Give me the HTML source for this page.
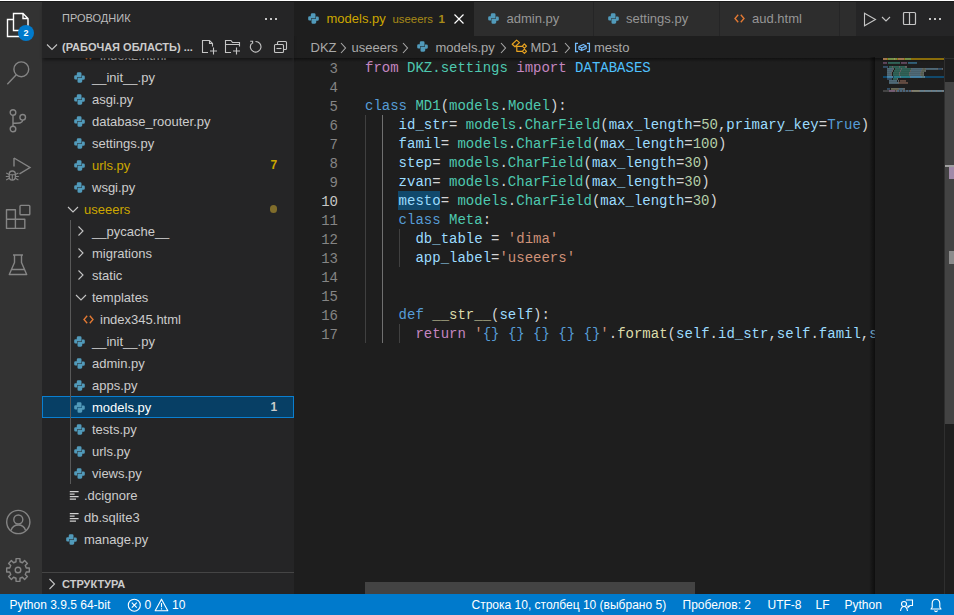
<!DOCTYPE html>
<html><head><meta charset="utf-8">
<style>
*{margin:0;padding:0;box-sizing:border-box}
html,body{width:954px;height:615px;overflow:hidden;background:#1e1e1e}
body{position:relative;font-family:"Liberation Sans",sans-serif;color:#cccccc}
.abs{position:absolute}
.tx{white-space:nowrap}
.mono{font-family:"Liberation Mono",monospace;white-space:pre}
.k{color:#c586c0}.b{color:#569cd6}.c{color:#4ec9b0}.v{color:#9cdcfe}.s{color:#ce9178}.n{color:#b5cea8}.f{color:#dcdcaa}.w{color:#d4d4d4}.cn{color:#4fc1ff}
</style></head><body>
<svg width="0" height="0" style="position:absolute">
 <defs>
  <symbol id="py" viewBox="0 0 12 12">
   <path fill="#519aba" d="M4.6 0.2H6.8Q8.2 0.2 8.2 1.6V5.6H3.3V8.2H1.6Q0.2 8.2 0.2 6.8V5Q0.2 3.6 1.6 3.6H3V1.8Q3 0.2 4.6 0.2Z"/>
   <path fill="#519aba" d="M7.4 11.8H5.2Q3.8 11.8 3.8 10.4V6.4H8.7V3.8H10.4Q11.8 3.8 11.8 5.2V7Q11.8 8.4 10.4 8.4H9V10.2Q9 11.8 7.4 11.8Z"/>
  </symbol>
  <symbol id="html" viewBox="0 0 11 9">
   <path fill="none" stroke="#e37933" stroke-width="1.35" d="M4.2 0.8L1 4.5L4.2 8.2M6.8 0.8L10 4.5L6.8 8.2"/>
  </symbol>
  <symbol id="lines" viewBox="0 0 10 9">
   <path fill="none" stroke="#d0d0d0" stroke-width="1.05" d="M0.8 0.6H9.6M0.8 3.1H5.6M0.8 5.6H9.6M0.8 8.1H7"/>
  </symbol>
 </defs>
</svg>
<div class="abs" style="left:0px;top:0px;width:954px;height:1px;background:#ffffff;"></div>
<div class="abs" style="left:0px;top:1px;width:954px;height:1px;background:#1a1a1a;"></div>
<div class="abs" style="left:0px;top:2px;width:42px;height:592px;background:#333333;"></div>
<div class="abs" style="left:42px;top:2px;width:252px;height:592px;background:#252526;"></div>
<div class="abs" style="left:294px;top:2px;width:660px;height:592px;background:#1e1e1e;"></div>
<svg class="abs" style="left:83px;top:51px;" width="11" height="9"><use href="#html"/></svg>
<div class="abs tx" style="left:100px;top:47.00px;font-size:13px;line-height:17px;color:#cccccc;">index2.html</div>
<svg class="abs" style="left:74px;top:72px;" width="11" height="11"><use href="#py"/></svg>
<div class="abs tx" style="left:92px;top:69.00px;font-size:13px;line-height:17px;color:#cccccc;">__init__.py</div>
<svg class="abs" style="left:74px;top:94px;" width="11" height="11"><use href="#py"/></svg>
<div class="abs tx" style="left:92px;top:91.00px;font-size:13px;line-height:17px;color:#cccccc;">asgi.py</div>
<svg class="abs" style="left:74px;top:116px;" width="11" height="11"><use href="#py"/></svg>
<div class="abs tx" style="left:92px;top:113.00px;font-size:13px;line-height:17px;color:#cccccc;">database_roouter.py</div>
<svg class="abs" style="left:74px;top:138px;" width="11" height="11"><use href="#py"/></svg>
<div class="abs tx" style="left:92px;top:135.00px;font-size:13px;line-height:17px;color:#cccccc;">settings.py</div>
<svg class="abs" style="left:74px;top:160px;" width="11" height="11"><use href="#py"/></svg>
<div class="abs tx" style="left:92px;top:157.00px;font-size:13px;line-height:17px;color:#cca700;">urls.py</div>
<div class="abs tx" style="left:270.5px;top:157.04px;font-size:12px;line-height:16px;color:#cca700;font-weight:bold;">7</div>
<svg class="abs" style="left:74px;top:182px;" width="11" height="11"><use href="#py"/></svg>
<div class="abs tx" style="left:92px;top:179.00px;font-size:13px;line-height:17px;color:#cccccc;">wsgi.py</div>
<svg class="abs" style="left:67px;top:201px;" width="12" height="16" viewBox="0 0 12 16"><path d="M1 6L6 11L11 6" fill="none" stroke="#c5c5c5" stroke-width="1.1"/></svg>
<div class="abs tx" style="left:84px;top:201.00px;font-size:13px;line-height:17px;color:#cca700;">useeers</div>
<div class="abs" style="left:269.5px;top:205.2px;width:7.6px;height:7.6px;background:#806d2b;border-radius:50%"></div>
<svg class="abs" style="left:77px;top:223px;" width="10" height="16" viewBox="0 0 10 16"><path d="M1.5 3.5L6 8L1.5 12.5" fill="none" stroke="#c5c5c5" stroke-width="1.1"/></svg>
<div class="abs tx" style="left:92px;top:223.00px;font-size:13px;line-height:17px;color:#cccccc;">__pycache__</div>
<svg class="abs" style="left:77px;top:245px;" width="10" height="16" viewBox="0 0 10 16"><path d="M1.5 3.5L6 8L1.5 12.5" fill="none" stroke="#c5c5c5" stroke-width="1.1"/></svg>
<div class="abs tx" style="left:92px;top:245.00px;font-size:13px;line-height:17px;color:#cccccc;">migrations</div>
<svg class="abs" style="left:77px;top:267px;" width="10" height="16" viewBox="0 0 10 16"><path d="M1.5 3.5L6 8L1.5 12.5" fill="none" stroke="#c5c5c5" stroke-width="1.1"/></svg>
<div class="abs tx" style="left:92px;top:267.00px;font-size:13px;line-height:17px;color:#cccccc;">static</div>
<svg class="abs" style="left:75px;top:289px;" width="12" height="16" viewBox="0 0 12 16"><path d="M1 6L6 11L11 6" fill="none" stroke="#c5c5c5" stroke-width="1.1"/></svg>
<div class="abs tx" style="left:92px;top:289.00px;font-size:13px;line-height:17px;color:#cccccc;">templates</div>
<svg class="abs" style="left:83px;top:315px;" width="11" height="9"><use href="#html"/></svg>
<div class="abs tx" style="left:100px;top:311.00px;font-size:13px;line-height:17px;color:#cccccc;">index345.html</div>
<svg class="abs" style="left:74px;top:336px;" width="11" height="11"><use href="#py"/></svg>
<div class="abs tx" style="left:92px;top:333.00px;font-size:13px;line-height:17px;color:#cccccc;">__init__.py</div>
<svg class="abs" style="left:74px;top:358px;" width="11" height="11"><use href="#py"/></svg>
<div class="abs tx" style="left:92px;top:355.00px;font-size:13px;line-height:17px;color:#cccccc;">admin.py</div>
<svg class="abs" style="left:74px;top:380px;" width="11" height="11"><use href="#py"/></svg>
<div class="abs tx" style="left:92px;top:377.00px;font-size:13px;line-height:17px;color:#cccccc;">apps.py</div>
<div class="abs" style="left:42px;top:396px;width:252px;height:22px;background:#073f65;border:1px solid #0a7fd0"></div>
<svg class="abs" style="left:74px;top:402px;" width="11" height="11"><use href="#py"/></svg>
<div class="abs tx" style="left:92px;top:399.00px;font-size:13px;line-height:17px;color:#ffffff;">models.py</div>
<div class="abs tx" style="left:270.5px;top:399.04px;font-size:12px;line-height:16px;color:#cccccc;font-weight:bold;">1</div>
<svg class="abs" style="left:74px;top:424px;" width="11" height="11"><use href="#py"/></svg>
<div class="abs tx" style="left:92px;top:421.00px;font-size:13px;line-height:17px;color:#cccccc;">tests.py</div>
<svg class="abs" style="left:74px;top:446px;" width="11" height="11"><use href="#py"/></svg>
<div class="abs tx" style="left:92px;top:443.00px;font-size:13px;line-height:17px;color:#cccccc;">urls.py</div>
<svg class="abs" style="left:74px;top:468px;" width="11" height="11"><use href="#py"/></svg>
<div class="abs tx" style="left:92px;top:465.00px;font-size:13px;line-height:17px;color:#cccccc;">views.py</div>
<svg class="abs" style="left:69px;top:491px;" width="10" height="9"><use href="#lines"/></svg>
<div class="abs tx" style="left:84px;top:487.00px;font-size:13px;line-height:17px;color:#cccccc;">.dcignore</div>
<svg class="abs" style="left:69px;top:513px;" width="10" height="9"><use href="#lines"/></svg>
<div class="abs tx" style="left:84px;top:509.00px;font-size:13px;line-height:17px;color:#cccccc;">db.sqlite3</div>
<svg class="abs" style="left:66px;top:534px;" width="11" height="11"><use href="#py"/></svg>
<div class="abs tx" style="left:84px;top:531.00px;font-size:13px;line-height:17px;color:#cccccc;">manage.py</div>
<div class="abs" style="left:70px;top:220px;width:1px;height:264px;background:#585858;"></div>
<div class="abs" style="left:42px;top:2px;width:252px;height:56px;background:#252526;box-shadow:0 3px 3px -1px rgba(0,0,0,0.45)"></div>
<div class="abs tx" style="left:62px;top:11.19px;font-size:11px;line-height:14px;color:#bbbbbb;">ПРОВОДНИК</div>
<svg class="abs" style="left:264px;top:17px;" width="14" height="4" viewBox="0 0 14 4"><rect x="1" y="1" width="2" height="2" fill="#c5c5c5"/><rect x="6" y="1" width="2" height="2" fill="#c5c5c5"/><rect x="11" y="1" width="2" height="2" fill="#c5c5c5"/></svg>
<svg class="abs" style="left:46px;top:42px;" width="12" height="10" viewBox="0 0 12 10"><path d="M1 2.5L6 7.5L11 2.5" fill="none" stroke="#c5c5c5" stroke-width="1.1"/></svg>
<div class="abs tx" style="left:62px;top:39.69px;font-size:11px;line-height:14px;color:#cccccc;font-weight:bold;">(РАБОЧАЯ ОБЛАСТЬ) ...</div>
<div class="abs" style="left:42px;top:572px;width:252px;height:1px;background:#454545;"></div>
<svg class="abs" style="left:47px;top:577px;" width="10" height="14" viewBox="0 0 10 14"><path d="M2.5 2L7.5 7L2.5 12" fill="none" stroke="#c5c5c5" stroke-width="1.1"/></svg>
<div class="abs tx" style="left:62px;top:577.19px;font-size:11px;line-height:14px;color:#cccccc;font-weight:bold;">СТРУКТУРА</div>
<svg class="abs" style="left:5px;top:11px;" width="26" height="28" viewBox="0 0 26 28"><path d="M8.5 2.5H18L23 7.5V19.5H8.5Z M18 2.5V7.5H23" fill="none" stroke="#ffffff" stroke-width="1.4" stroke-linejoin="miter"/><path d="M8.5 8.5H2.5V25.5H17V19.5" fill="none" stroke="#ffffff" stroke-width="1.4"/></svg>
<div class="abs" style="left:18px;top:25px;width:16px;height:16px;border-radius:50%;background:#007acc;color:#fff;font-size:9px;font-weight:bold;line-height:16px;text-align:center">2</div>
<svg class="abs" style="left:5px;top:59px;" width="28" height="28" viewBox="0 0 28 28"><circle cx="16.3" cy="10.3" r="7.4" fill="none" stroke="#858585" stroke-width="1.4"/><path d="M11.3 15.7L2.3 25.2" stroke="#858585" stroke-width="1.4"/></svg>
<svg class="abs" style="left:7px;top:107px;" width="24" height="26" viewBox="0 0 24 26"><circle cx="6" cy="5.5" r="2.8" fill="none" stroke="#858585" stroke-width="1.4"/><circle cx="6" cy="22" r="2.8" fill="none" stroke="#858585" stroke-width="1.4"/><circle cx="15.7" cy="10.3" r="2.8" fill="none" stroke="#858585" stroke-width="1.4"/><path d="M6 8.3V19.2M15.7 13.1C15.7 16 13 16.2 6 16.2" fill="none" stroke="#858585" stroke-width="1.4"/></svg>
<svg class="abs" style="left:4px;top:155px;" width="28" height="28" viewBox="0 0 28 28"><path d="M10 3V11.5M10 3L26 12.5L15.5 18.8" fill="none" stroke="#858585" stroke-width="1.4" stroke-linejoin="miter"/><path d="M5.2 19.5C5.2 17.3 6.6 16 8.3 16C10 16 11.4 17.3 11.4 19.5V21.5C11.4 23.8 10 25.2 8.3 25.2C6.6 25.2 5.2 23.8 5.2 21.5Z" fill="none" stroke="#858585" stroke-width="1.3"/><path d="M5.2 19.8H11.4M8.3 19.8V25M2.2 18L5.2 19.5M2.2 25L5.2 23.2M14.4 18L11.4 19.5M14.4 25L11.4 23.2M1.8 21.5H5.2M11.4 21.5H14.8" fill="none" stroke="#858585" stroke-width="1.1"/></svg>
<svg class="abs" style="left:4px;top:203px;" width="28" height="28" viewBox="0 0 28 28"><path d="M2.5 6.8H11.4V16.2H20.8V25.4H2.5ZM2.5 16.2H11.4V25.4" fill="none" stroke="#858585" stroke-width="1.4" stroke-linejoin="round"/><rect x="16" y="2.4" width="9.8" height="9.4" rx="0.8" fill="none" stroke="#858585" stroke-width="1.4"/></svg>
<svg class="abs" style="left:6px;top:252px;" width="26" height="28" viewBox="0 0 26 28"><path d="M7 3H17M8.5 3V10.5L3.3 22.5H20.7L15.5 10.5V3M5 17.5H19" fill="none" stroke="#858585" stroke-width="1.4" stroke-linejoin="round"/></svg>
<svg class="abs" style="left:5px;top:508px;" width="28" height="28" viewBox="0 0 28 28"><circle cx="13.3" cy="14" r="11.6" fill="none" stroke="#858585" stroke-width="1.4"/><circle cx="13.3" cy="11.5" r="4.5" fill="none" stroke="#858585" stroke-width="1.4"/><path d="M6 22.5C7.3 18.5 10 17 13.3 17C16.6 17 19.3 18.5 20.6 22.5" fill="none" stroke="#858585" stroke-width="1.4"/></svg>
<svg class="abs" style="left:4px;top:556px;" width="28" height="28" viewBox="0 0 28 28"><path d="M25.33 12.02L25.33 15.98L22.27 15.98L21.25 18.44L23.41 20.61L20.61 23.41L18.44 21.25L15.98 22.27L15.98 25.33L12.02 25.33L12.02 22.27L9.56 21.25L7.39 23.41L4.59 20.61L6.75 18.44L5.73 15.98L2.67 15.98L2.67 12.02L5.73 12.02L6.75 9.56L4.59 7.39L7.39 4.59L9.56 6.75L12.02 5.73L12.02 2.67L15.98 2.67L15.98 5.73L18.44 6.75L20.61 4.59L23.41 7.39L21.25 9.56L22.27 12.02Z" fill="none" stroke="#858585" stroke-width="1.4" stroke-linejoin="round"/><circle cx="14" cy="14" r="2.8" fill="none" stroke="#858585" stroke-width="1.4"/></svg>
<svg class="abs" style="left:201px;top:39px;" width="17" height="17" viewBox="0 0 17 17"><path d="M7 13.5H1.5V1.5H8.5L11.5 4.5V7.5M8.5 1.5V4.5H11.5M12.5 8.5V15.5M9 12H16" fill="none" stroke="#c5c5c5" stroke-width="1.1"/></svg>
<svg class="abs" style="left:224px;top:39px;" width="17" height="17" viewBox="0 0 17 17"><path d="M7 13.5H1.5V1.5H7L8.5 3.5H15.5V7.5M1.5 5.5H15.5M12.5 8.5V15.5M9 12H16" fill="none" stroke="#c5c5c5" stroke-width="1.1"/></svg>
<svg class="abs" style="left:248px;top:40px;" width="15" height="14" viewBox="0 0 15 14"><path d="M3.6 3.4A5.3 5.3 0 1 0 7.5 1.5" fill="none" stroke="#c5c5c5" stroke-width="1.1"/><path d="M2.2 1.2H4.6V3.8" fill="none" stroke="#c5c5c5" stroke-width="1.1"/></svg>
<svg class="abs" style="left:273px;top:40px;" width="15" height="14" viewBox="0 0 15 14"><path d="M4.5 4.5V2.5Q4.5 1.5 5.5 1.5H12.5Q13.5 1.5 13.5 2.5V8.5Q13.5 9.5 12.5 9.5H10.5" fill="none" stroke="#c5c5c5" stroke-width="1.1"/><rect x="1.5" y="4.5" width="9" height="8" rx="1" fill="none" stroke="#c5c5c5" stroke-width="1.1"/><path d="M3.5 8.5H8.5" stroke="#c5c5c5" stroke-width="1.1"/></svg>
<div class="abs" style="left:294px;top:2px;width:660px;height:34px;background:#252526;"></div>
<div class="abs" style="left:294px;top:2px;width:180px;height:34px;background:#1e1e1e;"></div>
<div class="abs" style="left:474px;top:2px;width:120px;height:34px;background:#2d2d2d;"></div>
<div class="abs" style="left:594px;top:2px;width:126px;height:34px;background:#2d2d2d;"></div>
<div class="abs" style="left:720px;top:2px;width:120px;height:34px;background:#2d2d2d;"></div>
<div class="abs" style="left:840px;top:2px;width:16px;height:34px;background:#2d2d2d;"></div>
<div class="abs" style="left:593px;top:2px;width:1px;height:34px;background:#252526;"></div>
<div class="abs" style="left:719px;top:2px;width:1px;height:34px;background:#252526;"></div>
<div class="abs" style="left:839px;top:2px;width:1px;height:34px;background:#252526;"></div>
<svg class="abs" style="left:308px;top:13px;" width="11" height="11"><use href="#py"/></svg>
<div class="abs tx" style="left:326.5px;top:10.00px;font-size:13px;line-height:17px;color:#cca700;">models.py</div>
<div class="abs tx" style="left:392.5px;top:11.55px;font-size:11.4px;line-height:15px;color:#a88b18;">useeers</div>
<div class="abs tx" style="left:438.5px;top:11.52px;font-size:11.5px;line-height:15px;color:#a88b18;font-weight:bold;">1</div>
<svg class="abs" style="left:453px;top:13px;" width="12" height="12" viewBox="0 0 12 12"><path d="M1.5 1.5L10.5 10.5M10.5 1.5L1.5 10.5" stroke="#ffffff" stroke-width="1.2"/></svg>
<svg class="abs" style="left:488px;top:13px;" width="11" height="11"><use href="#py"/></svg>
<div class="abs tx" style="left:506.5px;top:10.00px;font-size:13px;line-height:17px;color:#969696;">admin.py</div>
<svg class="abs" style="left:608px;top:13px;" width="11" height="11"><use href="#py"/></svg>
<div class="abs tx" style="left:626px;top:10.00px;font-size:13px;line-height:17px;color:#969696;">settings.py</div>
<svg class="abs" style="left:734px;top:14px;" width="11" height="9"><use href="#html"/></svg>
<div class="abs tx" style="left:752px;top:10.00px;font-size:13px;line-height:17px;color:#969696;">aud.html</div>
<svg class="abs" style="left:863px;top:12px;" width="14" height="15" viewBox="0 0 14 15"><path d="M1.5 1.2L12.5 7.5L1.5 13.8Z" fill="none" stroke="#c5c5c5" stroke-width="1.1"/></svg>
<svg class="abs" style="left:881px;top:16px;" width="10" height="6" viewBox="0 0 10 6"><path d="M1 1L5 5L9 1" fill="none" stroke="#c5c5c5" stroke-width="1.1"/></svg>
<svg class="abs" style="left:902px;top:11px;" width="15" height="15" viewBox="0 0 15 15"><rect x="1.5" y="1.5" width="12" height="12" rx="1" fill="none" stroke="#c5c5c5" stroke-width="1.2"/><path d="M7.5 1.5V13.5" stroke="#c5c5c5" stroke-width="1.2"/></svg>
<svg class="abs" style="left:928px;top:17px;" width="14" height="4" viewBox="0 0 14 4"><rect x="1" y="1" width="2" height="2" fill="#c5c5c5"/><rect x="6" y="1" width="2" height="2" fill="#c5c5c5"/><rect x="11" y="1" width="2" height="2" fill="#c5c5c5"/></svg>
<div class="abs tx" style="left:310.5px;top:39.00px;font-size:13px;line-height:17px;color:#a9a9a9;">DKZ</div>
<svg class="abs" style="left:339px;top:41px;" width="8" height="14" viewBox="0 0 8 14"><path d="M2 2L6.5 7L2 12" fill="none" stroke="#a9a9a9" stroke-width="1.1"/></svg>
<div class="abs tx" style="left:351.5px;top:39.00px;font-size:13px;line-height:17px;color:#a9a9a9;">useeers</div>
<svg class="abs" style="left:401px;top:41px;" width="8" height="14" viewBox="0 0 8 14"><path d="M2 2L6.5 7L2 12" fill="none" stroke="#a9a9a9" stroke-width="1.1"/></svg>
<svg class="abs" style="left:417px;top:41px;" width="11" height="11"><use href="#py"/></svg>
<div class="abs tx" style="left:435.5px;top:39.00px;font-size:13px;line-height:17px;color:#a9a9a9;">models.py</div>
<svg class="abs" style="left:499px;top:41px;" width="8" height="14" viewBox="0 0 8 14"><path d="M2 2L6.5 7L2 12" fill="none" stroke="#a9a9a9" stroke-width="1.1"/></svg>
<svg class="abs" style="left:511px;top:39px;" width="17" height="16" viewBox="0 0 17 16"><path d="M1.2 5.3L5.6 1.1L8.5 3.6L4 7.8Z M5.8 7V12.3H11.3M5.8 7.3H11.3 M13.4 5L15.5 7.1L13.4 9.2L11.3 7.1Z M13.4 10.2L15.5 12.3L13.4 14.4L11.3 12.3Z" fill="none" stroke="#e8a321" stroke-width="1.2" stroke-linejoin="round"/></svg>
<div class="abs tx" style="left:530.5px;top:39.00px;font-size:13px;line-height:17px;color:#a9a9a9;">MD1</div>
<svg class="abs" style="left:563px;top:41px;" width="8" height="14" viewBox="0 0 8 14"><path d="M2 2L6.5 7L2 12" fill="none" stroke="#a9a9a9" stroke-width="1.1"/></svg>
<svg class="abs" style="left:574px;top:40px;" width="17" height="14" viewBox="0 0 17 14"><path d="M4 3.4H1.6V11.6H4M13 3.4H15.4V11.6H13" fill="none" stroke="#75beff" stroke-width="1.3"/><path d="M4.9 6.6L9.4 4.4L12.2 5.9V8.4L7.7 10.6L4.9 9.1Z M4.9 6.6L7.7 8.1L12.2 5.9M7.7 8.1V10.6" fill="none" stroke="#75beff" stroke-width="1.1" stroke-linejoin="round"/></svg>
<div class="abs tx" style="left:594px;top:39.00px;font-size:13px;line-height:17px;color:#a9a9a9;">mesto</div>
<div class="abs" style="left:398px;top:191px;width:42px;height:19px;background:#11496c;"></div>
<div class="abs" style="left:365px;top:115px;width:1px;height:19px;background:#404040;"></div>
<div class="abs" style="left:382px;top:115px;width:1px;height:19px;background:#707070;"></div>
<div class="abs" style="left:365px;top:134px;width:1px;height:19px;background:#404040;"></div>
<div class="abs" style="left:382px;top:134px;width:1px;height:19px;background:#707070;"></div>
<div class="abs" style="left:365px;top:153px;width:1px;height:19px;background:#404040;"></div>
<div class="abs" style="left:382px;top:153px;width:1px;height:19px;background:#707070;"></div>
<div class="abs" style="left:365px;top:172px;width:1px;height:19px;background:#404040;"></div>
<div class="abs" style="left:382px;top:172px;width:1px;height:19px;background:#707070;"></div>
<div class="abs" style="left:365px;top:191px;width:1px;height:19px;background:#404040;"></div>
<div class="abs" style="left:382px;top:191px;width:1px;height:19px;background:#707070;"></div>
<div class="abs" style="left:365px;top:210px;width:1px;height:19px;background:#404040;"></div>
<div class="abs" style="left:382px;top:210px;width:1px;height:19px;background:#707070;"></div>
<div class="abs" style="left:365px;top:229px;width:1px;height:19px;background:#404040;"></div>
<div class="abs" style="left:382px;top:229px;width:1px;height:19px;background:#707070;"></div>
<div class="abs" style="left:365px;top:248px;width:1px;height:19px;background:#404040;"></div>
<div class="abs" style="left:382px;top:248px;width:1px;height:19px;background:#707070;"></div>
<div class="abs" style="left:365px;top:267px;width:1px;height:19px;background:#404040;"></div>
<div class="abs" style="left:382px;top:267px;width:1px;height:19px;background:#707070;"></div>
<div class="abs" style="left:365px;top:286px;width:1px;height:19px;background:#404040;"></div>
<div class="abs" style="left:382px;top:286px;width:1px;height:19px;background:#707070;"></div>
<div class="abs" style="left:365px;top:305px;width:1px;height:19px;background:#404040;"></div>
<div class="abs" style="left:382px;top:305px;width:1px;height:19px;background:#707070;"></div>
<div class="abs" style="left:365px;top:324px;width:1px;height:19px;background:#404040;"></div>
<div class="abs" style="left:382px;top:324px;width:1px;height:19px;background:#707070;"></div>
<div class="abs" style="left:399px;top:229px;width:1px;height:19px;background:#404040;"></div>
<div class="abs" style="left:399px;top:248px;width:1px;height:19px;background:#404040;"></div>
<div class="abs" style="left:399px;top:324px;width:1px;height:19px;background:#404040;"></div>
<div class="abs" style="left:294px;top:57px;width:581px;height:537px;overflow:hidden">
<div class="abs mono" style="left:0;top:2.5px;width:44px;text-align:right;font-size:14px;line-height:19px;color:#858585">3</div>
<div class="abs mono" style="left:71.0px;top:2px;font-size:14px;line-height:19px"><span class="k">from</span><span class="w"> </span><span class="c">DKZ</span><span class="c">.</span><span class="c">settings</span><span class="w"> </span><span class="k">import</span><span class="w"> </span><span class="cn">DATABASES</span></div>
<div class="abs mono" style="left:0;top:21.5px;width:44px;text-align:right;font-size:14px;line-height:19px;color:#858585">4</div>
<div class="abs mono" style="left:0;top:40.5px;width:44px;text-align:right;font-size:14px;line-height:19px;color:#858585">5</div>
<div class="abs mono" style="left:71.0px;top:40px;font-size:14px;line-height:19px"><span class="b">class</span><span class="w"> </span><span class="c">MD1</span><span class="w">(</span><span class="c">models</span><span class="w">.</span><span class="c">Model</span><span class="w">):</span></div>
<div class="abs mono" style="left:0;top:59.5px;width:44px;text-align:right;font-size:14px;line-height:19px;color:#858585">6</div>
<div class="abs mono" style="left:71.0px;top:59px;font-size:14px;line-height:19px"><span class="w">    </span><span class="v">id_str</span><span class="w">= </span><span class="c">models</span><span class="w">.</span><span class="c">CharField</span><span class="w">(</span><span class="v">max_length</span><span class="w">=</span><span class="n">50</span><span class="w">,</span><span class="v">primary_key</span><span class="w">=</span><span class="b">True</span><span class="w">)</span></div>
<div class="abs mono" style="left:0;top:78.5px;width:44px;text-align:right;font-size:14px;line-height:19px;color:#858585">7</div>
<div class="abs mono" style="left:71.0px;top:78px;font-size:14px;line-height:19px"><span class="w">    </span><span class="v">famil</span><span class="w">= </span><span class="c">models</span><span class="w">.</span><span class="c">CharField</span><span class="w">(</span><span class="v">max_length</span><span class="w">=</span><span class="n">100</span><span class="w">)</span></div>
<div class="abs mono" style="left:0;top:97.5px;width:44px;text-align:right;font-size:14px;line-height:19px;color:#858585">8</div>
<div class="abs mono" style="left:71.0px;top:97px;font-size:14px;line-height:19px"><span class="w">    </span><span class="v">step</span><span class="w">= </span><span class="c">models</span><span class="w">.</span><span class="c">CharField</span><span class="w">(</span><span class="v">max_length</span><span class="w">=</span><span class="n">30</span><span class="w">)</span></div>
<div class="abs mono" style="left:0;top:116.5px;width:44px;text-align:right;font-size:14px;line-height:19px;color:#858585">9</div>
<div class="abs mono" style="left:71.0px;top:116px;font-size:14px;line-height:19px"><span class="w">    </span><span class="v">zvan</span><span class="w">= </span><span class="c">models</span><span class="w">.</span><span class="c">CharField</span><span class="w">(</span><span class="v">max_length</span><span class="w">=</span><span class="n">30</span><span class="w">)</span></div>
<div class="abs mono" style="left:0;top:135.5px;width:44px;text-align:right;font-size:14px;line-height:19px;color:#c6c6c6">10</div>
<div class="abs mono" style="left:71.0px;top:135px;font-size:14px;line-height:19px"><span class="w">    </span><span class="v">mesto</span><span class="w">= </span><span class="c">models</span><span class="w">.</span><span class="c">CharField</span><span class="w">(</span><span class="v">max_length</span><span class="w">=</span><span class="n">30</span><span class="w">)</span></div>
<div class="abs mono" style="left:0;top:154.5px;width:44px;text-align:right;font-size:14px;line-height:19px;color:#858585">11</div>
<div class="abs mono" style="left:71.0px;top:154px;font-size:14px;line-height:19px"><span class="w">    </span><span class="b">class</span><span class="w"> </span><span class="c">Meta</span><span class="w">:</span></div>
<div class="abs mono" style="left:0;top:173.5px;width:44px;text-align:right;font-size:14px;line-height:19px;color:#858585">12</div>
<div class="abs mono" style="left:71.0px;top:173px;font-size:14px;line-height:19px"><span class="w">      </span><span class="v">db_table</span><span class="w"> = </span><span class="s">'dima'</span></div>
<div class="abs mono" style="left:0;top:192.5px;width:44px;text-align:right;font-size:14px;line-height:19px;color:#858585">13</div>
<div class="abs mono" style="left:71.0px;top:192px;font-size:14px;line-height:19px"><span class="w">      </span><span class="v">app_label</span><span class="w">=</span><span class="s">'useeers'</span></div>
<div class="abs mono" style="left:0;top:211.5px;width:44px;text-align:right;font-size:14px;line-height:19px;color:#858585">14</div>
<div class="abs mono" style="left:0;top:230.5px;width:44px;text-align:right;font-size:14px;line-height:19px;color:#858585">15</div>
<div class="abs mono" style="left:0;top:249.5px;width:44px;text-align:right;font-size:14px;line-height:19px;color:#858585">16</div>
<div class="abs mono" style="left:71.0px;top:249px;font-size:14px;line-height:19px"><span class="w">    </span><span class="b">def</span><span class="w"> </span><span class="f">__str__</span><span class="w">(</span><span class="v">self</span><span class="w">):</span></div>
<div class="abs mono" style="left:0;top:268.5px;width:44px;text-align:right;font-size:14px;line-height:19px;color:#858585">17</div>
<div class="abs mono" style="left:71.0px;top:268px;font-size:14px;line-height:19px"><span class="w">      </span><span class="k">return</span><span class="w"> </span><span class="s">'</span><span class="b">{}</span><span class="s"> </span><span class="b">{}</span><span class="s"> </span><span class="b">{}</span><span class="s"> </span><span class="b">{}</span><span class="s"> </span><span class="b">{}</span><span class="s">'</span><span class="w">.</span><span class="f">format</span><span class="w">(</span><span class="v">self</span><span class="w">.</span><span class="v">id_str</span><span class="w">,</span><span class="v">self</span><span class="w">.</span><span class="v">famil</span><span class="w">,</span><span class="v">self</span><span class="w">.</span><span class="v">step</span><span class="w">,</span><span class="v">self</span><span class="w">.</span><span class="v">zvan</span><span class="w">)</span></div>
</div>
<div class="abs" style="left:869px;top:57px;width:6px;height:537px;background:linear-gradient(to right,rgba(0,0,0,0),rgba(0,0,0,0.55))"></div>
<div class="abs" style="left:294px;top:58px;width:660px;height:4px;background:linear-gradient(to bottom,rgba(0,0,0,0.45),rgba(0,0,0,0))"></div>
<div class="abs" style="left:883px;top:58px;width:61px;height:2px;background:#8a6d0a;"></div>
<div class="abs" style="left:883px;top:76px;width:61px;height:2px;background:#11496c;"></div>
<div class="abs" style="left:883px;top:90px;width:61px;height:2px;background:#444444;"></div>
<svg class="abs" style="left:883px;top:58px;" width="61" height="40" viewBox="0 0 61 40"><rect x="0" y="0.2" width="4" height="1.5" fill="#c586c0" opacity="0.5"/><rect x="5" y="0.2" width="6" height="1.5" fill="#4ec9b0" opacity="0.5"/><rect x="11" y="0.2" width="1" height="1.5" fill="#d4d4d4" opacity="0.5"/><rect x="12" y="0.2" width="2" height="1.5" fill="#4ec9b0" opacity="0.5"/><rect x="15" y="0.2" width="6" height="1.5" fill="#c586c0" opacity="0.5"/><rect x="22" y="0.2" width="6" height="1.5" fill="#4ec9b0" opacity="0.5"/><rect x="0" y="4.2" width="4" height="1.5" fill="#c586c0" opacity="0.5"/><rect x="5" y="4.2" width="3" height="1.5" fill="#4ec9b0" opacity="0.5"/><rect x="8" y="4.2" width="1" height="1.5" fill="#4ec9b0" opacity="0.5"/><rect x="9" y="4.2" width="8" height="1.5" fill="#4ec9b0" opacity="0.5"/><rect x="18" y="4.2" width="6" height="1.5" fill="#c586c0" opacity="0.5"/><rect x="25" y="4.2" width="9" height="1.5" fill="#4fc1ff" opacity="0.5"/><rect x="0" y="8.2" width="5" height="1.5" fill="#569cd6" opacity="0.5"/><rect x="6" y="8.2" width="3" height="1.5" fill="#4ec9b0" opacity="0.5"/><rect x="9" y="8.2" width="1" height="1.5" fill="#d4d4d4" opacity="0.5"/><rect x="10" y="8.2" width="6" height="1.5" fill="#4ec9b0" opacity="0.5"/><rect x="16" y="8.2" width="1" height="1.5" fill="#d4d4d4" opacity="0.5"/><rect x="17" y="8.2" width="5" height="1.5" fill="#4ec9b0" opacity="0.5"/><rect x="22" y="8.2" width="2" height="1.5" fill="#d4d4d4" opacity="0.5"/><rect x="4" y="10.2" width="6" height="1.5" fill="#9cdcfe" opacity="0.5"/><rect x="10" y="10.2" width="1" height="1.5" fill="#d4d4d4" opacity="0.5"/><rect x="12" y="10.2" width="6" height="1.5" fill="#4ec9b0" opacity="0.5"/><rect x="18" y="10.2" width="1" height="1.5" fill="#d4d4d4" opacity="0.5"/><rect x="19" y="10.2" width="9" height="1.5" fill="#4ec9b0" opacity="0.5"/><rect x="28" y="10.2" width="1" height="1.5" fill="#d4d4d4" opacity="0.5"/><rect x="29" y="10.2" width="10" height="1.5" fill="#9cdcfe" opacity="0.5"/><rect x="39" y="10.2" width="1" height="1.5" fill="#d4d4d4" opacity="0.5"/><rect x="40" y="10.2" width="2" height="1.5" fill="#b5cea8" opacity="0.5"/><rect x="42" y="10.2" width="1" height="1.5" fill="#d4d4d4" opacity="0.5"/><rect x="43" y="10.2" width="11" height="1.5" fill="#9cdcfe" opacity="0.5"/><rect x="54" y="10.2" width="1" height="1.5" fill="#d4d4d4" opacity="0.5"/><rect x="55" y="10.2" width="4" height="1.5" fill="#569cd6" opacity="0.5"/><rect x="59" y="10.2" width="1" height="1.5" fill="#d4d4d4" opacity="0.5"/><rect x="4" y="12.2" width="5" height="1.5" fill="#9cdcfe" opacity="0.5"/><rect x="9" y="12.2" width="1" height="1.5" fill="#d4d4d4" opacity="0.5"/><rect x="11" y="12.2" width="6" height="1.5" fill="#4ec9b0" opacity="0.5"/><rect x="17" y="12.2" width="1" height="1.5" fill="#d4d4d4" opacity="0.5"/><rect x="18" y="12.2" width="9" height="1.5" fill="#4ec9b0" opacity="0.5"/><rect x="27" y="12.2" width="1" height="1.5" fill="#d4d4d4" opacity="0.5"/><rect x="28" y="12.2" width="10" height="1.5" fill="#9cdcfe" opacity="0.5"/><rect x="38" y="12.2" width="1" height="1.5" fill="#d4d4d4" opacity="0.5"/><rect x="39" y="12.2" width="3" height="1.5" fill="#b5cea8" opacity="0.5"/><rect x="42" y="12.2" width="1" height="1.5" fill="#d4d4d4" opacity="0.5"/><rect x="4" y="14.2" width="4" height="1.5" fill="#9cdcfe" opacity="0.5"/><rect x="8" y="14.2" width="1" height="1.5" fill="#d4d4d4" opacity="0.5"/><rect x="10" y="14.2" width="6" height="1.5" fill="#4ec9b0" opacity="0.5"/><rect x="16" y="14.2" width="1" height="1.5" fill="#d4d4d4" opacity="0.5"/><rect x="17" y="14.2" width="9" height="1.5" fill="#4ec9b0" opacity="0.5"/><rect x="26" y="14.2" width="1" height="1.5" fill="#d4d4d4" opacity="0.5"/><rect x="27" y="14.2" width="10" height="1.5" fill="#9cdcfe" opacity="0.5"/><rect x="37" y="14.2" width="1" height="1.5" fill="#d4d4d4" opacity="0.5"/><rect x="38" y="14.2" width="2" height="1.5" fill="#b5cea8" opacity="0.5"/><rect x="40" y="14.2" width="1" height="1.5" fill="#d4d4d4" opacity="0.5"/><rect x="4" y="16.2" width="4" height="1.5" fill="#9cdcfe" opacity="0.5"/><rect x="8" y="16.2" width="1" height="1.5" fill="#d4d4d4" opacity="0.5"/><rect x="10" y="16.2" width="6" height="1.5" fill="#4ec9b0" opacity="0.5"/><rect x="16" y="16.2" width="1" height="1.5" fill="#d4d4d4" opacity="0.5"/><rect x="17" y="16.2" width="9" height="1.5" fill="#4ec9b0" opacity="0.5"/><rect x="26" y="16.2" width="1" height="1.5" fill="#d4d4d4" opacity="0.5"/><rect x="27" y="16.2" width="10" height="1.5" fill="#9cdcfe" opacity="0.5"/><rect x="37" y="16.2" width="1" height="1.5" fill="#d4d4d4" opacity="0.5"/><rect x="38" y="16.2" width="2" height="1.5" fill="#b5cea8" opacity="0.5"/><rect x="40" y="16.2" width="1" height="1.5" fill="#d4d4d4" opacity="0.5"/><rect x="4" y="18.2" width="5" height="1.5" fill="#9cdcfe" opacity="0.5"/><rect x="9" y="18.2" width="1" height="1.5" fill="#d4d4d4" opacity="0.5"/><rect x="11" y="18.2" width="6" height="1.5" fill="#4ec9b0" opacity="0.5"/><rect x="17" y="18.2" width="1" height="1.5" fill="#d4d4d4" opacity="0.5"/><rect x="18" y="18.2" width="9" height="1.5" fill="#4ec9b0" opacity="0.5"/><rect x="27" y="18.2" width="1" height="1.5" fill="#d4d4d4" opacity="0.5"/><rect x="28" y="18.2" width="10" height="1.5" fill="#9cdcfe" opacity="0.5"/><rect x="38" y="18.2" width="1" height="1.5" fill="#d4d4d4" opacity="0.5"/><rect x="39" y="18.2" width="2" height="1.5" fill="#b5cea8" opacity="0.5"/><rect x="41" y="18.2" width="1" height="1.5" fill="#d4d4d4" opacity="0.5"/><rect x="4" y="20.2" width="5" height="1.5" fill="#569cd6" opacity="0.5"/><rect x="10" y="20.2" width="4" height="1.5" fill="#4ec9b0" opacity="0.5"/><rect x="14" y="20.2" width="1" height="1.5" fill="#d4d4d4" opacity="0.5"/><rect x="6" y="22.2" width="8" height="1.5" fill="#9cdcfe" opacity="0.5"/><rect x="15" y="22.2" width="1" height="1.5" fill="#d4d4d4" opacity="0.5"/><rect x="17" y="22.2" width="6" height="1.5" fill="#ce9178" opacity="0.5"/><rect x="6" y="24.2" width="9" height="1.5" fill="#9cdcfe" opacity="0.5"/><rect x="15" y="24.2" width="1" height="1.5" fill="#d4d4d4" opacity="0.5"/><rect x="16" y="24.2" width="9" height="1.5" fill="#ce9178" opacity="0.5"/><rect x="4" y="30.2" width="3" height="1.5" fill="#569cd6" opacity="0.5"/><rect x="8" y="30.2" width="7" height="1.5" fill="#dcdcaa" opacity="0.5"/><rect x="15" y="30.2" width="1" height="1.5" fill="#d4d4d4" opacity="0.5"/><rect x="16" y="30.2" width="4" height="1.5" fill="#9cdcfe" opacity="0.5"/><rect x="20" y="30.2" width="2" height="1.5" fill="#d4d4d4" opacity="0.5"/><rect x="6" y="32.2" width="6" height="1.5" fill="#c586c0" opacity="0.5"/><rect x="13" y="32.2" width="1" height="1.5" fill="#ce9178" opacity="0.5"/><rect x="14" y="32.2" width="2" height="1.5" fill="#569cd6" opacity="0.5"/><rect x="17" y="32.2" width="2" height="1.5" fill="#569cd6" opacity="0.5"/><rect x="20" y="32.2" width="2" height="1.5" fill="#569cd6" opacity="0.5"/><rect x="23" y="32.2" width="2" height="1.5" fill="#569cd6" opacity="0.5"/><rect x="26" y="32.2" width="2" height="1.5" fill="#569cd6" opacity="0.5"/><rect x="28" y="32.2" width="1" height="1.5" fill="#ce9178" opacity="0.5"/><rect x="29" y="32.2" width="1" height="1.5" fill="#d4d4d4" opacity="0.5"/><rect x="30" y="32.2" width="6" height="1.5" fill="#dcdcaa" opacity="0.5"/><rect x="36" y="32.2" width="1" height="1.5" fill="#d4d4d4" opacity="0.5"/><rect x="37" y="32.2" width="4" height="1.5" fill="#9cdcfe" opacity="0.5"/><rect x="41" y="32.2" width="1" height="1.5" fill="#d4d4d4" opacity="0.5"/><rect x="42" y="32.2" width="6" height="1.5" fill="#9cdcfe" opacity="0.5"/><rect x="48" y="32.2" width="1" height="1.5" fill="#d4d4d4" opacity="0.5"/><rect x="49" y="32.2" width="4" height="1.5" fill="#9cdcfe" opacity="0.5"/><rect x="53" y="32.2" width="1" height="1.5" fill="#d4d4d4" opacity="0.5"/><rect x="54" y="32.2" width="5" height="1.5" fill="#9cdcfe" opacity="0.5"/><rect x="59" y="32.2" width="1" height="1.5" fill="#d4d4d4" opacity="0.5"/><rect x="60" y="32.2" width="1" height="1.5" fill="#9cdcfe" opacity="0.5"/></svg>
<div class="abs" style="left:944px;top:57px;width:10px;height:537px;background:#1e1e1e;"></div>
<div class="abs" style="left:944px;top:57px;width:1px;height:537px;background:#2f2f2f;"></div>
<div class="abs" style="left:944px;top:58px;width:10px;height:1px;background:#2f2f2f;"></div>
<div class="abs" style="left:945px;top:82px;width:9px;height:342px;background:#434343;"></div>
<div class="abs" style="left:945px;top:165px;width:9px;height:2px;background:#a0a0a0;"></div>
<div class="abs" style="left:949px;top:167px;width:5px;height:12px;background:#a08aa8;"></div>
<div class="abs" style="left:949px;top:251px;width:5px;height:13px;background:#8c8c8c;"></div>
<div class="abs" style="left:365px;top:582px;width:330px;height:12px;background:#434343;"></div>
<div class="abs" style="left:0px;top:594px;width:954px;height:21px;background:#007acc;"></div>
<div class="abs tx" style="left:9.5px;top:597.04px;font-size:12px;line-height:16px;color:#ffffff;">Python 3.9.5 64-bit</div>
<div class="abs tx" style="left:144.5px;top:597.04px;font-size:12px;line-height:16px;color:#ffffff;">0</div>
<div class="abs tx" style="left:172px;top:597.04px;font-size:12px;line-height:16px;color:#ffffff;">10</div>
<div class="abs tx" style="left:471.5px;top:597.04px;font-size:12px;line-height:16px;color:#ffffff;">Строка 10, столбец 10 (выбрано 5)</div>
<div class="abs tx" style="left:682.5px;top:597.04px;font-size:12px;line-height:16px;color:#ffffff;">Пробелов: 2</div>
<div class="abs tx" style="left:767.5px;top:597.04px;font-size:12px;line-height:16px;color:#ffffff;">UTF-8</div>
<div class="abs tx" style="left:815.5px;top:597.04px;font-size:12px;line-height:16px;color:#ffffff;">LF</div>
<div class="abs tx" style="left:844.5px;top:597.04px;font-size:12px;line-height:16px;color:#ffffff;">Python</div>
<svg class="abs" style="left:127px;top:598px;" width="15" height="15" viewBox="0 0 15 15"><circle cx="7.3" cy="7.2" r="6" fill="none" stroke="#fff" stroke-width="1.1"/><path d="M4.8 4.7L9.8 9.7M9.8 4.7L4.8 9.7" stroke="#fff" stroke-width="1.1"/></svg>
<svg class="abs" style="left:154px;top:598px;" width="15" height="14" viewBox="0 0 15 14"><path d="M7.5 1.2L13.8 12.8H1.2Z" fill="none" stroke="#fff" stroke-width="1.1" stroke-linejoin="round"/><path d="M7.5 5V9.3M7.5 10.3V11.5" stroke="#fff" stroke-width="1.1"/></svg>
<svg class="abs" style="left:899px;top:598px;" width="15" height="15" viewBox="0 0 15 15"><path d="M5 8.5C3.5 8.5 2 10 1.5 13M5 8.5C6.5 8.5 8 10 8.5 13" fill="none" stroke="#fff" stroke-width="1.1"/><circle cx="5" cy="6" r="2.5" fill="none" stroke="#fff" stroke-width="1.1"/><path d="M7 2H13.5V7.5H11L9 9.5V7.5" fill="none" stroke="#fff" stroke-width="1.1"/></svg>
<svg class="abs" style="left:929px;top:597px;" width="14" height="16" viewBox="0 0 14 16"><path d="M2 12H12L10.8 10.3V6.5C10.8 4 9.2 2.3 7 2.3C4.8 2.3 3.2 4 3.2 6.5V10.3Z M5.5 13.5C5.8 14.3 6.3 14.6 7 14.6C7.7 14.6 8.2 14.3 8.5 13.5" fill="none" stroke="#fff" stroke-width="1.1" stroke-linejoin="round"/></svg>
</body></html>
